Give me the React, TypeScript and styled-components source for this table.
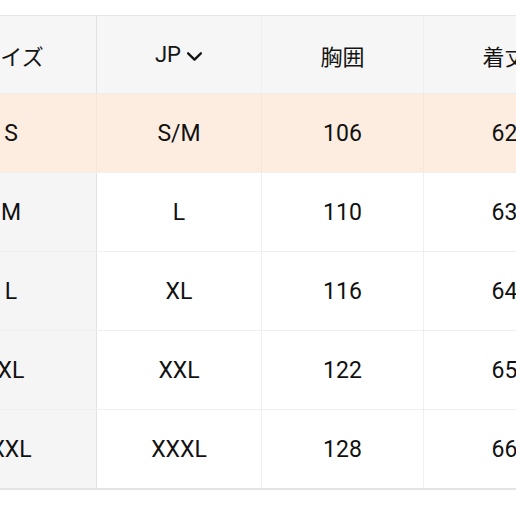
import React, { useLayoutEffect, useRef } from 'react';
import styled, { createGlobalStyle } from 'styled-components';

const GlobalStyle = createGlobalStyle`
  html, body {
    margin: 0;
    padding: 0;
    background: #ffffff;
    font-family: Roboto, "Noto Sans CJK JP", sans-serif;
    color: #111111;
  }
`;

const COLUMNS = [
  { key: 'size', title: 'サイズ', width: 171 },
  { key: 'jp', title: 'JP', width: 165, dropdown: true },
  { key: 'chest', title: '胸囲', width: 162 },
  { key: 'length', title: '着丈', width: 162 },
  { key: 'shoulder', title: '肩幅', width: 162 },
];

const ROWS = [
  { size: 'S', jp: 'S/M', chest: '106', length: '62', shoulder: '44', active: true },
  { size: 'M', jp: 'L', chest: '110', length: '63', shoulder: '45' },
  { size: 'L', jp: 'XL', chest: '116', length: '64', shoulder: '46' },
  { size: 'XL', jp: 'XXL', chest: '122', length: '65', shoulder: '47' },
  { size: 'XXL', jp: 'XXXL', chest: '128', length: '66', shoulder: '48' },
];

function App() {
  const scrollRef = useRef<HTMLDivElement>(null);

  // テーブルは横スクロール済みの状態
  useLayoutEffect(() => {
    if (scrollRef.current) scrollRef.current.scrollLeft = 74;
  }, []);

  return (
    <>
      <GlobalStyle />
      <Page>
        <ScrollArea ref={scrollRef}>
          <Table>
            <HeaderRow>
              {COLUMNS.map((col, i) => (
                <HeaderCell key={col.key} $width={col.width} $first={i === 0}>
                  {col.title}
                  {col.dropdown && (
                    <Chevron viewBox="0 0 16 10" aria-hidden>
                      <polyline points="2,2 8,8 14,2" />
                    </Chevron>
                  )}
                </HeaderCell>
              ))}
            </HeaderRow>
            {ROWS.map(row => (
              <BodyRow key={row.size} $active={!!row.active}>
                {COLUMNS.map((col, i) => (
                  <BodyCell key={col.key} $width={col.width} $first={i === 0} $active={!!row.active}>
                    {row[col.key as keyof typeof row]}
                  </BodyCell>
                ))}
              </BodyRow>
            ))}
          </Table>
        </ScrollArea>
      </Page>
    </>
  );
}

const Page = styled.div`
  width: 516px;
  height: 516px;
  padding-top: 15px;
  box-sizing: border-box;
  overflow: hidden;
`;

const ScrollArea = styled.div`
  width: 516px;
  overflow-x: auto;
  scrollbar-width: none;
  &::-webkit-scrollbar {
    display: none;
  }
`;

const Table = styled.div`
  display: flex;
  flex-direction: column;
  width: max-content;
  border-top: 1px solid #e6e6e6;
  border-bottom: 2px solid #e4e4e4;
`;

const HeaderRow = styled.div`
  display: flex;
  height: 77px;
  background: #f6f6f6;
  border-bottom: 1px solid #ededed;
`;

const BodyRow = styled.div<{ $active: boolean }>`
  display: flex;
  height: 78px;
  background: ${p => (p.$active ? '#fdede0' : '#ffffff')};
  border-bottom: 1px solid #efefef;
  &:last-child {
    border-bottom: none;
  }
`;

const Cell = styled.div<{ $width: number; $first: boolean }>`
  display: flex;
  align-items: center;
  justify-content: center;
  gap: 5px;
  flex: 0 0 ${p => p.$width}px;
  box-sizing: border-box;
  border-right: 1px solid ${p => (p.$first ? '#e2e2e2' : '#efefef')};
  font-size: 23px;
`;

const HeaderCell = styled(Cell)`
  font-size: 22px;
  color: #141414;
`;

const BodyCell = styled(Cell)<{ $active: boolean }>`
  background: ${p => (p.$first && !p.$active ? '#f5f5f5' : 'transparent')};
  border-right-color: ${p => (p.$active ? 'rgba(0,0,0,0.025)' : p.$first ? '#e2e2e2' : '#efefef')};
`;

const Chevron = styled.svg`
  width: 17px;
  height: 11px;
  fill: none;
  stroke: #141414;
  stroke-width: 2.2;
  stroke-linecap: round;
  stroke-linejoin: round;
  margin-top: 3px;
`;

export default App;
